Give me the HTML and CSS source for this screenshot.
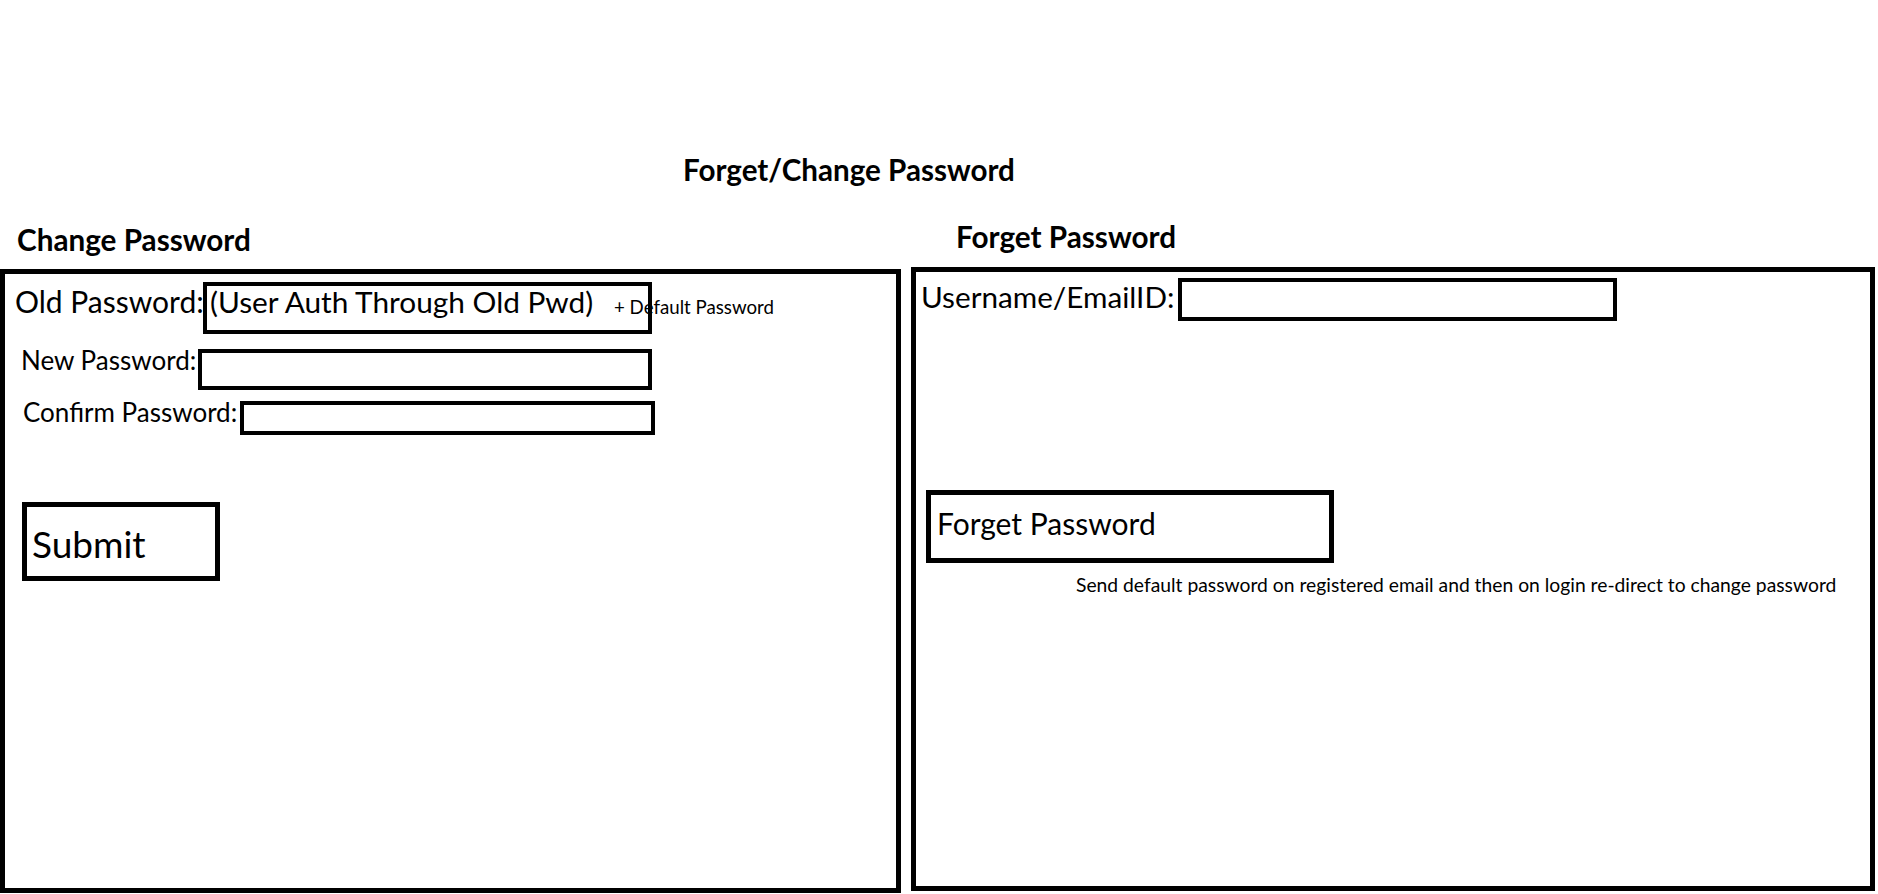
FILE: index.html
```html
<!DOCTYPE html>
<html lang="en">
<head>
<meta charset="utf-8">
<title>Forget/Change Password</title>
<link rel="stylesheet" href="styles.css">
</head>
<body>
<div class="page">
  <h1 class="title">Forget/Change Password</h1>
  <div class="columns">
    <section class="col col-left">
      <h2 class="heading heading-left">Change Password</h2>
      <div class="box box-left">
        <div class="row row-old">
          <span class="label label-old">Old Password:</span>
          <div class="field field-old">(User Auth Through Old Pwd)</div>
          <span class="hint">+ Default Password</span>
        </div>
        <div class="row row-new">
          <span class="label label-new">New Password:</span>
          <div class="field field-new"></div>
        </div>
        <div class="row row-confirm">
          <span class="label label-confirm">Confirm Password:</span>
          <div class="field field-confirm"></div>
        </div>
        <div class="btn btn-submit">Submit</div>
      </div>
    </section>
    <section class="col col-right">
      <h2 class="heading heading-right">Forget Password</h2>
      <div class="box box-right">
        <div class="row row-user">
          <span class="label label-user">Username/EmailID:</span>
          <div class="field field-user"></div>
        </div>
        <div class="btn btn-forget">Forget Password</div>
        <p class="note">Send default password on registered email and then on login re-direct to change password</p>
      </div>
    </section>
  </div>
</div>
</body>
</html>
```

FILE: styles.css
```css
* { box-sizing: border-box; }
html, body { margin: 0; padding: 0; background: #fff; }
body {
  font-family: Lato, "Open Sans", sans-serif;
  color: #000;
  width: 1878px;
  height: 894px;
  overflow: hidden;
}
.page { display: flex; flex-direction: column; }
.title {
  margin: 155px 0 0 683px;
  font-size: 29.6px;
  line-height: 1;
  font-weight: 700;
}
.columns {
  display: flex;
  align-items: flex-start;
  gap: 10px;
  margin-top: 37px;
}
.col { display: flex; flex-direction: column; }
.col-left { width: 901px; padding-top: 3px; }
.col-right { width: 964px; }
.heading {
  margin: 0;
  font-weight: 700;
  font-size: 29.7px;
  line-height: 1;
}
.heading-left { padding-left: 17px; margin-bottom: 15px; }
.heading-right { padding-left: 45px; margin-bottom: 16px; }
.box {
  border: 5px solid #000;
  height: 624px;
  display: flex;
  flex-direction: column;
  align-items: flex-start;
}
.row { display: flex; align-items: flex-start; }
.label { flex: none; line-height: 1; white-space: nowrap; }
.field {
  flex: none;
  border: 4px solid #000;
  line-height: 1;
  white-space: nowrap;
}
.row-old { margin: 8px 0 0 10px; }
.label-old { width: 188px; font-size: 30px; margin-top: 4px; }
.field-old { width: 449px; height: 52px; font-size: 29.8px; padding: 1px 0 0 3px; }
.hint { font-size: 18.7px; line-height: 1; margin: 16px 0 0 -38px; white-space: nowrap; }
.row-new { margin: 15px 0 0 16px; }
.label-new { width: 177px; font-size: 26px; margin-top: -2px; }
.field-new { width: 454px; height: 41px; }
.row-confirm { margin: 11px 0 0 18px; }
.label-confirm { width: 217px; font-size: 26px; margin-top: -2px; }
.field-confirm { width: 415px; height: 34px; }
.btn {
  flex: none;
  border: 5px solid #000;
  line-height: 1;
  white-space: nowrap;
}
.btn-submit {
  margin: 67px 0 0 17px;
  width: 198px;
  height: 79px;
  font-size: 37px;
  padding: 18px 0 0 5px;
}
.row-user { margin: 6px 0 0 5px; }
.label-user { width: 257px; font-size: 29.7px; margin-top: 4px; }
.field-user { width: 439px; height: 43px; }
.btn-forget {
  margin: 169px 0 0 10px;
  width: 408px;
  height: 73px;
  font-size: 30px;
  padding: 13px 0 0 6px;
}
.note {
  margin: 12px 0 0 160px;
  font-size: 19.3px;
  line-height: 1;
  white-space: nowrap;
}
```
